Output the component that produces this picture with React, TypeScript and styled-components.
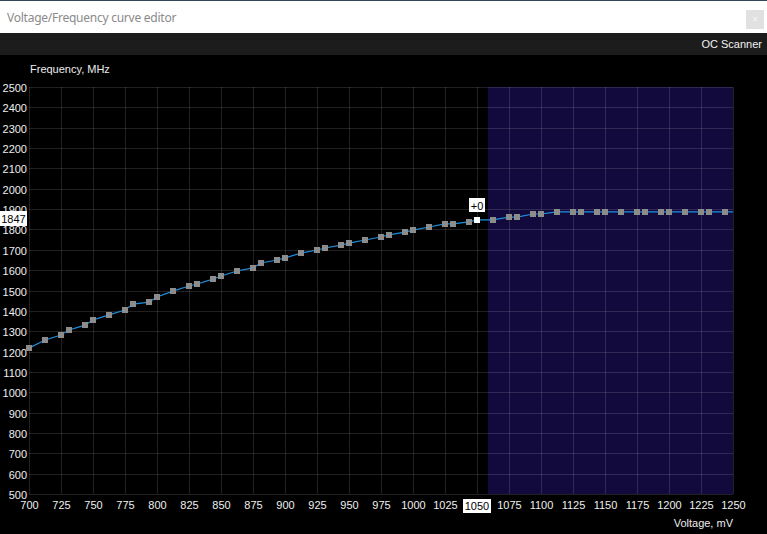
import React from "react";
import styled, { createGlobalStyle } from "styled-components";

const GlobalStyle = createGlobalStyle`
  html, body {
    margin: 0;
    padding: 0;
    background: #000;
    overflow: hidden;
  }
  body {
    font-family: "Liberation Sans", Arial, sans-serif;
  }
`;

const Window = styled.div`
  width: 767px;
  height: 534px;
  display: flex;
  flex-direction: column;
  background: #000;
`;

const TitleBar = styled.div`
  height: 32px;
  border-top: 1px solid #34465a;
  background: #fff;
  display: flex;
  justify-content: space-between;
  align-items: flex-start;
  padding: 0 3px 0 7px;
`;

const Title = styled.div`
  font-family: "Noto Sans", "Open Sans", sans-serif;
  font-size: 12px;
  color: #8a8a8a;
  line-height: 33px;
  letter-spacing: -0.25px;
`;

const CloseButton = styled.div`
  width: 18px;
  height: 19px;
  margin-top: 9px;
  background: #e1e1e1;
  color: #f6f6f6;
  font-size: 10px;
  line-height: 19px;
  text-align: center;
`;

const Toolbar = styled.div`
  height: 22px;
  background: #1c1c1c;
  display: flex;
  justify-content: flex-end;
  align-items: center;
  padding-right: 5px;
`;

const ToolButton = styled.span`
  font-size: 11px;
  color: #f2f2f2;
`;

const ChartBody = styled.div`
  flex: 1;
  display: flex;
  flex-direction: column;
  background: #000;
`;

const AxisTitle = styled.div<{ $align: "left" | "right" }>`
  font-size: 11px;
  line-height: 13px;
  color: #ececec;
  text-align: ${({ $align }) => $align};
  padding: ${({ $align }) =>
    $align === "left" ? "8px 0 4px 30px" : "3px 34px 0 0"};
`;

const Chart = styled.svg`
  display: block;
  font-family: "Liberation Sans", Arial, sans-serif;
  font-size: 11px;
`;

const LEFT = 29;
const RIGHT = 733;
const TOP = 7;
const BOTTOM = 414;
const PX_PER_MV = (RIGHT - LEFT) / 550;
const PX_PER_MHZ = (BOTTOM - TOP) / 2000;

const vx = (mv: number) => LEFT + (mv - 700) * PX_PER_MV;
const fy = (mhz: number) => TOP + (2500 - mhz) * PX_PER_MHZ;

const freqTable: number[] = [
  1217, 1257, 1281, 1306, 1330, 1355, 1380, 1404, 1433, 1443, 1468, 1497, 1522,
  1532, 1556, 1571, 1596, 1611, 1635, 1650, 1660, 1684, 1699, 1709, 1723, 1733,
  1748, 1763, 1773, 1787, 1797, 1812, 1827, 1827, 1837, 1847, 1847, 1861, 1861,
  1876, 1876,
];

// voltage points repeat every 50mV at these offsets
const offsets = [0, 12.5, 25, 31.25, 43.75];
const curve: { mv: number; mhz: number }[] = [];
for (let base = 700; base < 1250; base += 50) {
  offsets.forEach((o) => {
    const i = curve.length;
    curve.push({ mv: base + o, mhz: freqTable[i] ?? 1886 });
  });
}

const SELECTED_MV = 1050;

const voltTicks = Array.from({ length: 23 }, (_, i) => 700 + i * 25);
const freqTicks = Array.from({ length: 21 }, (_, i) => 500 + i * 100);

export default function App() {
  const line =
    curve.map((p) => `${vx(p.mv)},${fy(p.mhz)}`).join(" ") +
    ` ${RIGHT},${fy(1886)}`;
  const selected = curve.find((p) => p.mv === SELECTED_MV)!;
  const sx = Math.round(vx(selected.mv));
  const sy = Math.round(fy(selected.mhz));

  return (
    <>
      <GlobalStyle />
      <Window>
        <TitleBar>
          <Title>Voltage/Frequency curve editor</Title>
          <CloseButton>×</CloseButton>
        </TitleBar>
        <Toolbar>
          <ToolButton>OC Scanner</ToolButton>
        </Toolbar>
        <ChartBody>
          <AxisTitle $align="left">Frequency, MHz</AxisTitle>
          <Chart width={767} height={434} viewBox="0 0 767 434">
            <rect
              x={488}
              y={TOP}
              width={RIGHT - 488}
              height={BOTTOM - TOP}
              fill="#120a3d"
            />
            <g stroke="rgba(255,255,255,0.13)" strokeWidth={1} shapeRendering="crispEdges">
              {voltTicks.map((v) => (
                <line
                  key={v}
                  x1={Math.round(vx(v)) + 0.5}
                  x2={Math.round(vx(v)) + 0.5}
                  y1={TOP}
                  y2={BOTTOM}
                />
              ))}
              {freqTicks.map((f) => (
                <line
                  key={f}
                  x1={LEFT}
                  x2={RIGHT}
                  y1={Math.round(fy(f)) + 0.5}
                  y2={Math.round(fy(f)) + 0.5}
                />
              ))}
            </g>
            <g fill="#efefef" textAnchor="end" dominantBaseline="central">
              {freqTicks.map((f) => (
                <text key={f} x={27} y={Math.round(fy(f)) + 0.5}>
                  {f}
                </text>
              ))}
            </g>
            <g fill="#efefef" textAnchor="middle" dominantBaseline="central">
              {voltTicks
                .filter((v) => v !== SELECTED_MV)
                .map((v) => (
                  <text key={v} x={vx(v) + 0.5} y={425}>
                    {v}
                  </text>
                ))}
            </g>
            <polyline
              points={line}
              fill="none"
              stroke="#1b90e2"
              strokeWidth={1.2}
            />
            <g fill="#8c8c8c" shapeRendering="crispEdges">
              {curve
                .filter((p) => p.mv !== SELECTED_MV)
                .map((p) => (
                  <rect
                    key={p.mv}
                    x={Math.round(vx(p.mv)) - 3}
                    y={Math.round(fy(p.mhz)) - 3}
                    width={6}
                    height={6}
                  />
                ))}
            </g>
            <rect x={sx - 3} y={sy - 3} width={6} height={6} fill="#fff" />

            {/* +0 offset tooltip */}
            <rect x={469} y={118} width={16} height={14} fill="#fff" />
            <text x={477} y={125.5} textAnchor="middle" dominantBaseline="central" fill="#000">
              +0
            </text>

            {/* frequency readout on Y axis */}
            <rect x={0} y={131} width={27} height={15} fill="#fff" />
            <text x={13.5} y={138.5} textAnchor="middle" dominantBaseline="central" fill="#000">
              1847
            </text>

            {/* voltage readout on X axis */}
            <rect x={463} y={419} width={28} height={14} fill="#fff" />
            <text x={477} y={426} textAnchor="middle" dominantBaseline="central" fill="#000">
              1050
            </text>
          </Chart>
          <AxisTitle $align="right">Voltage, mV</AxisTitle>
        </ChartBody>
      </Window>
    </>
  );
}
